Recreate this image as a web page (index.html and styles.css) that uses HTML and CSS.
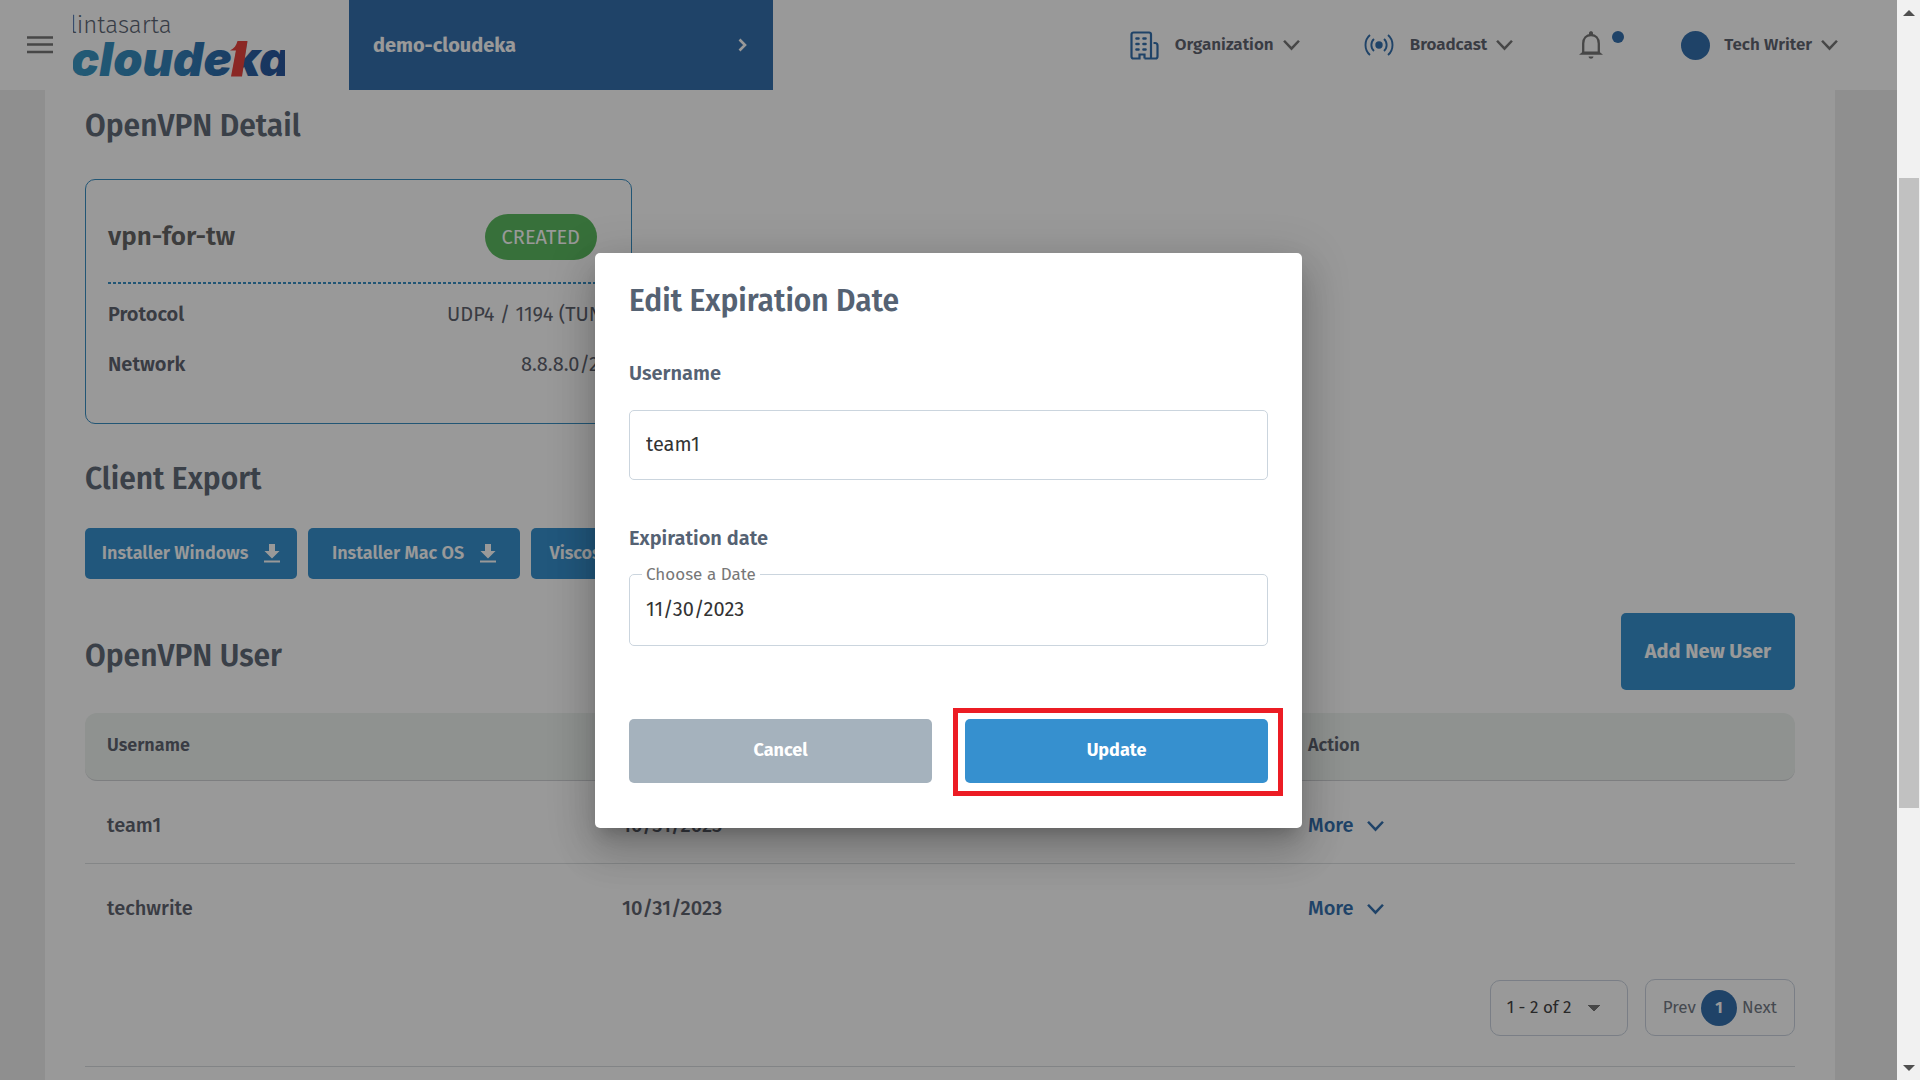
FILE: index.html
```html
<!DOCTYPE html>
<html lang="en">
<head>
<meta charset="utf-8">
<meta name="viewport" content="width=device-width, initial-scale=1">
<title>OpenVPN Detail - Cloudeka</title>
<link rel="stylesheet" href="styles.css">
</head>
<body>
<svg class="sprite" aria-hidden="true">
  <symbol id="chevron" viewBox="0 0 16 11"><path d="M1 1.500l7 7.500 7-7.500" fill="none" stroke="currentColor" stroke-width="2.400"/></symbol>
  <symbol id="download" viewBox="0 0 16 20"><path d="M5 1h6v7h4.500L8 15.500.500 8H5zM0 17.500h16v2H0z" fill="currentColor"/></symbol>
</svg>
<div class="window">
  <div class="viewport">
    <header class="topbar">
      <button class="menu" type="button" aria-label="Menu">
        <svg width="26" height="18" viewBox="0 0 26 18"><path d="M0 1.500h26M0 8.500h26M0 16h26" stroke="currentColor" stroke-width="2.400"/></svg>
      </button>
      <a class="logo" href="#" aria-label="Lintasarta Cloudeka">
        <svg width="212" height="66" viewBox="0 0 212 66">
          <defs><linearGradient id="brand" gradientUnits="userSpaceOnUse" x1="0" y1="0" x2="212" y2="0"><stop offset="0" stop-color="#3a98c4"/><stop offset=".5" stop-color="#3380b8"/><stop offset=".8" stop-color="#2a62a4"/><stop offset="1" stop-color="#29559c"/></linearGradient></defs>
          <text class="logo-top" x="-3" y="21">lintasarta</text>
          <text class="logo-name" x="-2" y="64" fill="url(#brand)">cloudeka</text>
          <path d="M158 64.500L163 38.500h-6c4-2 6.500-5 7.500-9.500h10L169 64.500z" fill="#e8443f"/>
        </svg>
      </a>
      <button class="project" type="button"><span>demo-cloudeka</span>
        <svg width="9" height="14" viewBox="0 0 9 14"><path d="M1.500 1.500L7 7l-5.500 5.500" fill="none" stroke="currentColor" stroke-width="2.600"/></svg>
      </button>
      <nav class="tools">
        <button class="tool" type="button">
          <svg width="29" height="29" viewBox="0 0 29 29" fill="none" stroke="#3570ad" stroke-width="2.200"><path d="M14.500 27.500v-4h-5v4h-6A2 2 0 0 1 1.500 25.500v-22a2 2 0 0 1 2-2H19a2 2 0 0 1 2 2v24h4.500a2 2 0 0 0 2-2V14.500a2.500 2.500 0 0 0-2.500-2.500h-1.500M21 27.500h-6.500"/><path d="M6.500 7.500h2M13.500 7.500h2M6.500 13h2M13.500 13h2M6.500 18.500h2M13.500 18.500h2" stroke-width="2.600" stroke-linecap="round"/></svg>
          <span>Organization</span><svg class="chev"><use href="#chevron"/></svg>
        </button>
        <button class="tool" type="button">
          <svg width="30" height="22" viewBox="0 0 30 22" fill="none" stroke="#3570ad" stroke-width="1.900"><circle cx="15" cy="11" r="3.700" fill="#3570ad" stroke="none"/><path d="M10 5c-3.500 3-3.500 9 0 12M20 5c3.500 3 3.500 9 0 12M6 1c-6 5-6 15 0 20M24 1c6 5 6 15 0 20"/></svg>
          <span>Broadcast</span><svg class="chev"><use href="#chevron"/></svg>
        </button>
        <button class="bell" type="button" aria-label="Notifications">
          <svg width="24" height="28" viewBox="0 0 24 28"><path d="M4.200 22V12.500C4.200 7 7.500 4 12 4s7.800 3 7.800 8.500V22" fill="none" stroke="currentColor" stroke-width="2.300"/><path d="M0 23.800L4 20.500h16l4 3.300zM9.500 25.500h5c-.5 3-4.500 3-5 0zM10 4V2c0-2.500 4-2.500 4 0v2z" fill="currentColor"/></svg>
          <span class="dot"></span>
        </button>
        <button class="tool" type="button">
          <span class="avatar"></span><span>Tech Writer</span><svg class="chev"><use href="#chevron"/></svg>
        </button>
      </nav>
    </header>

    <main class="panel">
      <h1 class="title">OpenVPN Detail</h1>
      <section class="vpn">
        <div class="vpn-head"><h2>vpn-for-tw</h2><span class="badge">CREATED</span></div>
        <dl class="facts">
          <div><dt>Protocol</dt><dd>UDP4 / 1194 (TUN)</dd></div>
          <div><dt>Network</dt><dd>8.8.8.0/24</dd></div>
        </dl>
      </section>
      <h2 class="title">Client Export</h2>
      <div class="exports">
        <button class="export" type="button">Installer Windows<svg><use href="#download"/></svg></button>
        <button class="export" type="button">Installer Mac OS<svg><use href="#download"/></svg></button>
        <button class="export" type="button">Viscosity Bundles<svg><use href="#download"/></svg></button>
      </div>
      <div class="users-head"><h2 class="title">OpenVPN User</h2><button class="add" type="button">Add New User</button></div>
      <table class="users">
        <colgroup><col class="c-user"><col class="c-date"><col></colgroup>
        <thead><tr><th>Username</th><th>Expired Date</th><th>Action</th></tr></thead>
        <tbody>
          <tr><td>team1</td><td>10/31/2023</td><td><button class="more" type="button">More<svg class="chev"><use href="#chevron"/></svg></button></td></tr>
          <tr><td>techwrite</td><td>10/31/2023</td><td><button class="more" type="button">More<svg class="chev"><use href="#chevron"/></svg></button></td></tr>
        </tbody>
      </table>
      <div class="paging">
        <select class="range" aria-label="Rows shown"><option>1 - 2 of 2</option></select>
        <nav class="pager" aria-label="Pages"><a href="#">Prev</a><a class="current" href="#">1</a><a href="#">Next</a></nav>
      </div>
    </main>

    <div class="overlay">
      <form class="dialog" role="dialog" aria-labelledby="dialog-title">
        <h2 class="title" id="dialog-title">Edit Expiration Date</h2>
        <label class="label" for="username">Username</label>
        <input class="field" id="username" type="text" value="team1">
        <label class="label second" for="expiry">Expiration date</label>
        <fieldset class="outlined">
          <legend>Choose a Date</legend>
          <input id="expiry" type="text" value="11/30/2023">
        </fieldset>
        <div class="actions">
          <button class="cancel" type="button">Cancel</button>
          <div class="marked"><button class="update" type="button">Update</button></div>
        </div>
      </form>
    </div>
  </div>
  <div class="scrollbar" aria-hidden="true">
    <svg width="12" height="6" viewBox="0 0 12 6"><path d="M0 6l6-6 6 6z" fill="#505050"/></svg>
    <div class="track"><div class="thumb"></div></div>
    <svg width="12" height="6" viewBox="0 0 12 6"><path d="M0 0l6 6 6-6z" fill="#505050"/></svg>
  </div>
</div>
</body>
</html>
```
FILE: styles.css
```css
* { box-sizing: border-box; }

body {
  margin: 0;
  background: #f1f1f1;
  color: #5f6470;
  font: 400 20px/24px "Fira Sans", Roboto, "Noto Sans", sans-serif;
}

button, input, select { font: inherit; color: inherit; }
button { border: 0; padding: 0; background: none; cursor: pointer; }
h1, h2, dl, dd { margin: 0; }
.sprite { position: absolute; width: 0; height: 0; }

.window { display: grid; grid-template-columns: minmax(0, 1fr) 23px; height: 100vh; }
.viewport { position: relative; overflow: hidden; background: #eeeeee; }

/* Top bar */
.topbar {
  display: flex;
  align-items: center;
  height: 90px;
  padding: 0 59px 0 27px;
  background: #fff;
}
.menu { display: flex; color: #777; }
.logo { display: flex; margin-left: 20px; }
.logo svg { overflow: hidden; }
.logo-top { font: 300 24px "Fira Sans", Roboto, sans-serif; fill: #5d6675; }
.logo-name { font: italic 900 47px Inter, sans-serif; }
.project {
  display: flex;
  align-items: center;
  justify-content: space-between;
  width: 424px;
  height: 90px;
  margin-left: 64px;
  padding: 0 26px 0 24px;
  background: #3570ad;
  color: #fff;
  font-weight: 700;
}
.tools { display: flex; align-items: center; margin-left: auto; font-size: 17px; font-weight: 600; }
.tool { display: flex; align-items: center; gap: 16px; margin-right: 64px; }
.tool:nth-child(2) { margin-right: 66px; }
.tool:last-child { gap: 14px; margin-right: 0; }
.tool .chev { margin-left: -7px; color: #777; }
.tool:last-child .chev { margin-left: -5px; }
.chev { width: 17px; height: 12px; }
.bell { display: flex; gap: 9px; margin-right: 57px; color: #777; }
.dot { width: 12px; height: 12px; border-radius: 50%; background: #3570ad; }
.avatar { width: 29px; height: 29px; border-radius: 50%; background: #3570ad; }

/* Page panel */
.panel { margin: 0 62px 0 45px; padding: 17px 40px 0; min-height: 100%; background: #fff; }
.title { padding-top: 1px; color: #626b79; font-size: 30px; font-weight: 600; line-height: 36px; }
.vpn {
  width: 547px;
  height: 245px;
  margin-top: 35px;
  padding: 0 22px;
  border: 1px solid #3a8fc4;
  border-radius: 10px;
}
.vpn-head {
  display: flex;
  align-items: center;
  justify-content: space-between;
  height: 104px;
  padding: 9px 12px 0 0;
  background: repeating-linear-gradient(to right, #3a8fc4 0 3px, transparent 3px 5px) bottom / 100% 2px no-repeat;
}
.vpn-head h2 { color: #666; font-size: 26px; font-weight: 600; }
.badge { padding: 11px 17px; border-radius: 23px; background: #5dbb61; color: #fff; }
.facts { display: grid; gap: 26px; padding-top: 18px; }
.facts div { display: flex; justify-content: space-between; }
.facts dt { font-weight: 600; }
.vpn + .title { margin-top: 36px; }

.exports { display: flex; gap: 11px; margin-top: 31px; }
.export {
  display: flex;
  align-items: center;
  justify-content: center;
  gap: 16px;
  width: 212px;
  height: 51px;
  padding-bottom: 2px;
  border-radius: 5px;
  background: #3892cf;
  color: #fff;
  font-size: 18px;
  font-weight: 600;
}
.export svg { width: 16px; height: 20px; }

.users-head { display: flex; align-items: center; justify-content: space-between; margin-top: 34px; }
.users-head .title { padding-top: 8px; }
.add { height: 77px; padding: 0 24px 2px; border-radius: 5px; background: #3892cf; color: #fff; font-weight: 700; }

.users { width: 100%; margin-top: 23px; border-spacing: 0; table-layout: fixed; text-align: left; }
.c-user { width: 515px; }
.c-date { width: 686px; }
.users th { height: 68px; padding: 0 22px 4px; border-bottom: 1px solid #d0d3d6; background: #eef3f0; font-size: 18px; font-weight: 600; }
.users th:first-child { border-radius: 12px 0 0 12px; }
.users th:last-child { border-radius: 0 12px 12px 0; }
.users td { height: 83px; padding: 5px 22px 0; font-weight: 500; }
.users tr:first-child td { border-bottom: 1px solid #dcdfe2; }
.more { display: flex; align-items: center; gap: 13px; color: #3570ad; font-weight: 500; }
.more .chev { margin-top: 2px; }

.paging {
  display: flex;
  align-items: center;
  justify-content: flex-end;
  gap: 17px;
  margin-top: 32px;
  padding-bottom: 30px;
  border-bottom: 1px solid #d9dce0;
  font-size: 17px;
}
.range {
  width: 138px;
  height: 56px;
  padding: 0 16px;
  border: 1px solid #cbd3df;
  border-radius: 10px;
  appearance: none;
  background: conic-gradient(from -45deg at 50% 100%, #777 90deg, transparent 0) 96px 24px / 14px 7px no-repeat;
  color: #444;
}
.pager {
  display: flex;
  align-items: center;
  gap: 5px;
  height: 57px;
  padding: 0 17px;
  border: 1px solid #cbd3df;
  border-radius: 10px;
}
.pager a { color: #747b86; text-decoration: none; }
.pager .current {
  width: 36px;
  border-radius: 50%;
  background: #3570ad;
  color: #fff;
  font-size: 16px;
  font-weight: 700;
  line-height: 36px;
  text-align: center;
}

/* Dialog */
.overlay {
  position: absolute;
  inset: 0;
  display: flex;
  align-items: center;
  justify-content: center;
  background: rgba(0, 0, 0, .4);
}
.dialog {
  width: 707px;
  padding: 29px 34px 45px;
  border-radius: 5px;
  background: #fff;
  box-shadow: 0 11px 15px -7px rgba(0, 0, 0, .2), 0 24px 38px 3px rgba(0, 0, 0, .14), 0 9px 46px 8px rgba(0, 0, 0, .12);
}
.dialog .title, .label { color: #556273; }
.label { display: block; margin-top: 42px; font-weight: 600; }
.field { display: block; width: 100%; height: 70px; margin-top: 25px; padding: 0 16px 2px; border: 1px solid #cbd5de; border-radius: 5px; color: #333; }
.second { margin-top: 46px; }
.outlined { min-width: 0; height: 83px; margin: 13px 0 0; padding: 0 16px 0 12px; border: 1px solid #cbd5de; border-radius: 5px; }
.outlined legend { padding: 0 4px; color: #777; font-size: 17px; }
.outlined input { display: block; width: 100%; height: 44px; padding: 0 4px; border: 0; outline: 0; background: none; color: #333; }
.actions { display: grid; grid-template-columns: 1fr 1fr; align-items: center; gap: 33px; margin-top: 73px; }
.actions button { width: 100%; height: 64px; padding-bottom: 2px; border-radius: 5px; color: #fff; font-size: 18px; font-weight: 700; }
.cancel { background: #a5b2bd; }
.update { background: #3690cf; }
.marked { position: relative; }
.marked::after { content: ""; position: absolute; inset: -11px -15px -13px -12px; border: 5px solid #ec1c24; pointer-events: none; }

/* Scrollbar column */
.scrollbar { display: flex; flex-direction: column; align-items: center; gap: 7px; padding: 10px 0 9px; background: #f1f1f1; }
.track { display: grid; grid-template-rows: 155fr 630fr 250fr; flex: 1; width: 20px; }
.thumb { grid-row: 2; background: #c1c1c1; }
```
